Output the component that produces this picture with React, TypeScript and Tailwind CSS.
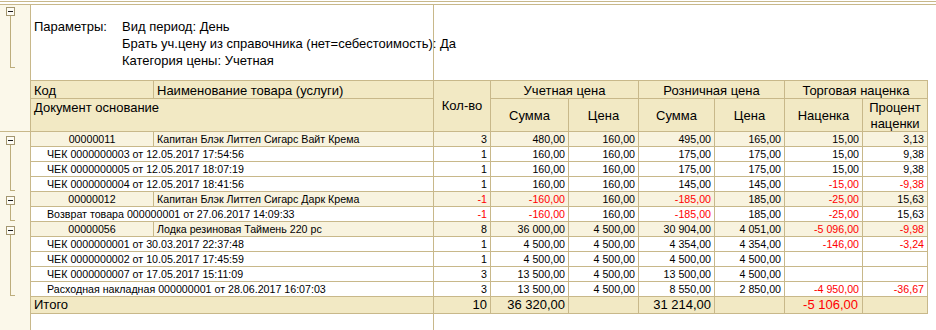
import React from "react";

type GK = "group" | "child" | "last";

const COLS = "grid grid-cols-[123px_280px_57px_78px_70px_76px_70px_78px_65px] w-[897px]";

function Gutter({ kind, h = 15 }: { kind: GK; h?: number }) {
  return (
    <div className="w-[31px] shrink-0 border-r border-[#c8b88a] bg-[#fbf8ea]">
      <svg width={30} height={h} className="block" shapeRendering="crispEdges">
        {kind === "group" && (
          <>
            <rect x={6.5} y={4.5} width={8} height={8} fill="#fdfcf5" stroke="#a3967000" />
            <rect x={6.5} y={4.5} width={8} height={8} fill="none" stroke="#a39670" />
            <line x1={8} y1={8.5} x2={13} y2={8.5} stroke="#1a1a1a" />
            <line x1={10.5} y1={13} x2={10.5} y2={15} stroke="#bcad7c" />
          </>
        )}
        {kind === "child" && <line x1={10.5} y1={0} x2={10.5} y2={15} stroke="#bcad7c" />}
        {kind === "last" && (
          <>
            <line x1={10.5} y1={0} x2={10.5} y2={14} stroke="#bcad7c" />
            <line x1={10} y1={13.5} x2={15} y2={13.5} stroke="#bcad7c" />
          </>
        )}
      </svg>
    </div>
  );
}

const red = (v: string) => (v.startsWith("-") ? "text-[#ff0000]" : "text-black");

function NumCells({ vals }: { vals: string[] }) {
  return (
    <>
      {vals.map((v, i) => (
        <div
          key={i}
          className={`border-r border-b border-[#c8b88a] text-right pr-[3px] whitespace-nowrap overflow-hidden ${red(v)}`}
        >
          {v}
        </div>
      ))}
    </>
  );
}

function GroupRow({ code, name, vals }: { code: string; name: string; vals: string[] }) {
  return (
    <div className="flex">
      <Gutter kind="group" />
      <div className={`${COLS} h-[15px] bg-[#f8f3df] text-[10.67px] leading-[14px]`}>
        <div className="border-r border-b border-[#c8b88a] text-center whitespace-nowrap overflow-hidden">{code}</div>
        <div className="border-r border-b border-[#c8b88a] pl-[3px] whitespace-nowrap overflow-hidden">{name}</div>
        <NumCells vals={vals} />
      </div>
    </div>
  );
}

function ChildRow({ doc, vals, last }: { doc: string; vals: string[]; last?: boolean }) {
  return (
    <div className="flex">
      <Gutter kind={last ? "last" : "child"} />
      <div className={`${COLS} h-[15px] bg-white text-[10.67px] leading-[14px]`}>
        <div className="col-span-2 border-r border-b border-[#c8b88a] pl-[16px] whitespace-nowrap overflow-hidden">{doc}</div>
        <NumCells vals={vals} />
      </div>
    </div>
  );
}

const H = "border-r border-b border-[#c8b88a]";

export default function App() {
  return (
    <div className="w-[936px] h-[330px] overflow-hidden bg-white text-black font-['Liberation_Sans',Arial,sans-serif] flex flex-col pt-[1px]">
      <div className="h-[4px] border-y border-[#c8b88a] shrink-0" />

      {/* parameters + header */}
      <div className="flex shrink-0">
        <div className="w-[31px] h-[127px] shrink-0 border-r border-b border-[#c8b88a] bg-[#fbf8ea]">
          <svg width={30} height={126} className="block" shapeRendering="crispEdges">
            <rect x={6.5} y={2.5} width={8} height={8} fill="#fdfcf5" stroke="#a39670" />
            <line x1={8} y1={6.5} x2={13} y2={6.5} stroke="#1a1a1a" />
            <line x1={10.5} y1={11} x2={10.5} y2={63} stroke="#bcad7c" />
            <line x1={10} y1={62.5} x2={15} y2={62.5} stroke="#bcad7c" />
          </svg>
        </div>
        <div className="flex flex-col">
          <div className="h-[75px] flex">
            <div className="w-[403px] border-r border-[#c8b88a] pl-[3px] pt-[13px] text-[13px] leading-[17px] whitespace-nowrap">
              <div className="grid grid-cols-[88px_auto]">
                <div>Параметры:</div>
                <div className="flex flex-col">
                  <div>Вид период: День</div>
                  <div>Брать уч.цену из справочника (нет=себестоимость): Да</div>
                  <div>Категория цены: Учетная</div>
                </div>
              </div>
            </div>
          </div>
          <div className={`${COLS} grid-rows-[18px_33px] border-t border-[#c8b88a] bg-[#f2e9c4] text-[13px] leading-[16px] whitespace-nowrap`}>
            <div className={`${H} pl-[3px] pt-[2px]`}>Код</div>
            <div className={`${H} pl-[3px] pt-[2px]`}>Наименование товара (услуги)</div>
            <div className={`${H} row-span-2 flex items-center justify-center`}>Кол-во</div>
            <div className={`${H} col-span-2 text-center pt-[2px]`}>Учетная цена</div>
            <div className={`${H} col-span-2 text-center pt-[2px]`}>Розничная цена</div>
            <div className={`${H} col-span-2 text-center pt-[2px]`}>Торговая наценка</div>
            <div className={`${H} col-span-2 pl-[3px] pt-[1px]`}>Документ основание</div>
            <div className={`${H} flex items-center justify-center pt-[2px]`}>Сумма</div>
            <div className={`${H} flex items-center justify-center pt-[2px]`}>Цена</div>
            <div className={`${H} flex items-center justify-center pt-[2px]`}>Сумма</div>
            <div className={`${H} flex items-center justify-center pt-[2px]`}>Цена</div>
            <div className={`${H} flex items-center justify-center pt-[2px]`}>Наценка</div>
            <div className={`${H} flex flex-col items-center justify-center text-center pt-[1px]`}>
              <div>Процент</div>
              <div>наценки</div>
            </div>
          </div>
        </div>
      </div>

      {/* data */}
      <GroupRow
        code="00000011"
        name="Капитан Блэк Литтел Сигарс Вайт Крема"
        vals={["3", "480,00", "160,00", "495,00", "165,00", "15,00", "3,13"]}
      />
      <ChildRow doc="ЧЕК 0000000003 от 12.05.2017 17:54:56" vals={["1", "160,00", "160,00", "175,00", "175,00", "15,00", "9,38"]} />
      <ChildRow doc="ЧЕК 0000000005 от 12.05.2017 18:07:19" vals={["1", "160,00", "160,00", "175,00", "175,00", "15,00", "9,38"]} />
      <ChildRow last doc="ЧЕК 0000000004 от 12.05.2017 18:41:56" vals={["1", "160,00", "160,00", "145,00", "145,00", "-15,00", "-9,38"]} />
      <GroupRow
        code="00000012"
        name="Капитан Блэк Литтел Сигарс Дарк Крема"
        vals={["-1", "-160,00", "160,00", "-185,00", "185,00", "-25,00", "15,63"]}
      />
      <ChildRow last doc="Возврат товара 000000001 от 27.06.2017 14:09:33" vals={["-1", "-160,00", "160,00", "-185,00", "185,00", "-25,00", "15,63"]} />
      <GroupRow
        code="00000056"
        name="Лодка резиновая Таймень 220 рс"
        vals={["8", "36\u00a0000,00", "4\u00a0500,00", "30\u00a0904,00", "4\u00a0051,00", "-5\u00a0096,00", "-9,98"]}
      />
      <ChildRow doc="ЧЕК 0000000001 от 30.03.2017 22:37:48" vals={["1", "4\u00a0500,00", "4\u00a0500,00", "4\u00a0354,00", "4\u00a0354,00", "-146,00", "-3,24"]} />
      <ChildRow doc="ЧЕК 0000000002 от 10.05.2017 17:45:59" vals={["1", "4\u00a0500,00", "4\u00a0500,00", "4\u00a0500,00", "4\u00a0500,00", "", ""]} />
      <ChildRow doc="ЧЕК 0000000007 от 17.05.2017 15:11:09" vals={["3", "13\u00a0500,00", "4\u00a0500,00", "13\u00a0500,00", "4\u00a0500,00", "", ""]} />
      <ChildRow last doc="Расходная накладная 000000001 от 28.06.2017 16:07:03" vals={["3", "13\u00a0500,00", "4\u00a0500,00", "8\u00a0550,00", "2\u00a0850,00", "-4\u00a0950,00", "-36,67"]} />

      {/* total */}
      <div className="flex shrink-0">
        <div className="w-[31px] h-[17px] shrink-0 border-r border-[#c8b88a] bg-[#fbf8ea]" />
        <div className={`${COLS} h-[17px] bg-[#f2e9c4] text-[13px] leading-[16px] whitespace-nowrap`}>
          <div className={`${H} col-span-2 pl-[3px]`}>Итого</div>
          <div className={`${H} text-right pr-[3px]`}>10</div>
          <div className={`${H} text-right pr-[3px]`}>36&nbsp;320,00</div>
          <div className={H}></div>
          <div className={`${H} text-right pr-[3px]`}>31&nbsp;214,00</div>
          <div className={H}></div>
          <div className={`${H} text-right pr-[4px] text-[#ff0000]`}>-5&nbsp;106,00</div>
          <div className={H}></div>
        </div>
      </div>

      {/* remainder */}
      <div className="flex flex-1">
        <div className="w-[31px] shrink-0 border-r border-[#c8b88a] bg-[#fbf8ea]" />
        <div className="w-[403px] border-r border-[#c8b88a]" />
      </div>
    </div>
  );
}
